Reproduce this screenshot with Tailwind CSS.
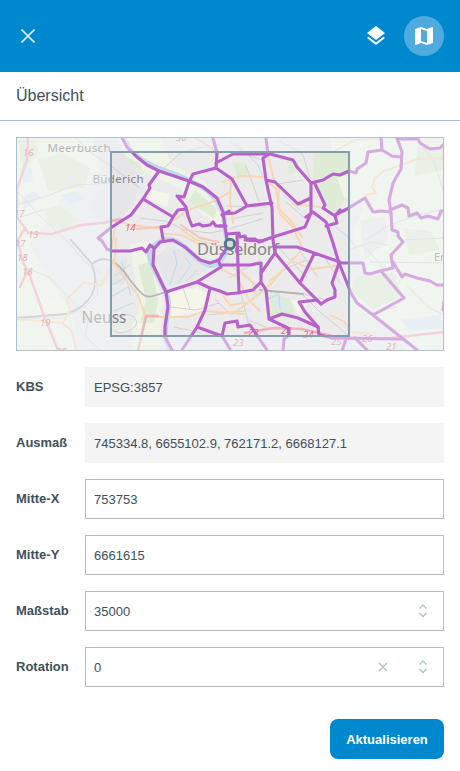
<!DOCTYPE html>
<html lang="de">
<head>
<meta charset="utf-8">
<title>Übersicht</title>
<script src="https://cdn.jsdelivr.net/npm/@tailwindcss/browser@4"></script>
</head>
<body class="bg-white text-[#3e505b] font-['Liberation_Sans',Arial,sans-serif]">
<header class="h-[72px] bg-[#0088ce] flex items-center justify-between px-4">
  <button class="size-6 flex items-center justify-center" aria-label="Schließen">
    <svg class="size-6" viewBox="0 0 24 24" stroke="#e5f5fc" stroke-width="1.7" fill="none"><path d="M5.5 5.5 18.5 18.5M18.5 5.5 5.5 18.5"/></svg>
  </button>
  <div class="flex items-center gap-2">
    <button class="size-10 flex items-center justify-center" aria-label="Ebenen">
      <svg class="size-6" viewBox="0 0 24 24" fill="white"><path d="m11.99 18.54-7.37-5.73L3 14.07l9 7 9-7-1.63-1.27zM12 16l7.36-5.73L21 9l-9-7-9 7 1.63 1.27z"/></svg>
    </button>
    <button class="size-10 rounded-full bg-[#4dacdd] flex items-center justify-center" aria-label="Karte">
      <svg class="size-6" viewBox="0 0 24 24" fill="white"><path d="m20.5 3-.16.03L15 5.1 9 3 3.36 4.9c-.21.07-.36.25-.36.48V20.5c0 .28.22.5.5.5l.16-.03L9 18.9l6 2.1 5.64-1.9c.21-.07.36-.25.36-.48V3.5c0-.28-.22-.5-.5-.5zM15 19l-6-2.11V5l6 2.11V19z"/></svg>
    </button>
  </div>
</header>
<h1 class="h-[49px] border-b border-[#adbfc8] px-4 pt-[14px] text-base leading-5 font-normal">Übersicht</h1>
<main class="px-4 pt-4">
  <div class="h-[214px] overflow-hidden">
  <svg class="block w-full h-full" viewBox="16 137 428 214" fill="none" stroke-linejoin="round" stroke-linecap="round">
    <rect x="16" y="137" width="428" height="214" fill="#ebebeb"/>
    <!-- countryside and parks -->
    <g fill="#eff4e7">
      <path d="M16 137H92L104 160 85 190 60 200 30 245 55 290 72 312 75 350H16zM118 137H160L172 165 205 182 222 208V228L202 215 180 188 130 166zM330 137H444V350H405L388 325 350 310 365 270 352 235 365 205 340 195zM130 245 152 241 150 265 162 296 160 350H132V325L140 310z"/>
    </g>
    <g fill="#deebd5">
      <path d="M38 158 65 154 90 168 84 188 48 191zM18 140H35L39 153 23 171zM45 209 60 205 78 220 65 230 48 225zM315 153H349V174L337 178 345 200 333 216 320 199 312 182zM287 157 298 161 300 170 289 176zM138 265 151 262 158 301 154 323H140L146 300zM122 155 139 163 144 173 124 162zM195 190 217 209 214 218 188 202zM234 163H247V176L237 180zM267 290 292 300 295 317 268 319zM355 276 395 273 401 297 373 309 351 291zM404 228 430 231 440 250 409 255zM418 147H443V170L414 176z"/>
    </g>
    <path fill="#f6f5e9" d="M170 292 197 288 207 294 201 312 172 316zM150 190 170 194 167 207 149 199zM290 300 310 299 299 315zM30 293 60 303 70 324 42 320z"/>
    <path fill="#dae9f1" d="M21 168 30 166 33 181 23 183zM22 197 35 191 41 198 23 210zM61 195 76 191 85 199 70 205zM65 175 74 173 72 180zM400 320 440 315 444 328 410 331zM271 296 283 300 287 312 276 308z"/>
    <!-- built-up blocks -->
    <path fill="#e6e6e8" d="M92 140 118 140 124 158 140 172 136 198 120 220 102 225 88 204 107 184zM170 244 185 252 208 268 192 281 167 286 156 258zM92 265 127 258 124 284 99 286zM360 221 385 216 388 240 365 260z"/>
    <path fill="#f1e9e7" d="M207 183 240 216 234 231 223 224zM275 205 293 203 299 222 279 229zM212 296 231 296 234 314 211 309zM244 277 257 276 259 284 242 287z"/>
    <!-- water -->
    <g stroke="#bfdbea">
      <path stroke-width="5" d="M124 137C128 153 145 163 161 169S202 184 212 195 224 211 225 226 231 246 222 259 201 263 189 251 169 236 156 244 152 266 162 284 168 306 166 325 168 347 173 351"/>
      <path stroke-width="1" d="M170 285 177 263 174 251M178 283 191 265 185 257M186 281 197 271M114 276 130 265M112 285 129 275M111 297 128 287M114 311 133 303M122 263 131 296M16 219 42 210M235 143 246 153 258 165 263 177M268 299 279 294 280 309M285 196 300 210M331 223 349 238 356 247M365 247 385 270"/>
    </g>
    <!-- minor streets and railways -->
    <g stroke="#d2d2d5" stroke-width="1">
      <path d="M16 190 40 216 66 240 85 261 100 273M75 137 90 152 115 169 140 188M16 205 47 196 75 185 113 183M16 318 64 318 86 306 98 294 95 273 75 250 66 240M31 270 49 277 77 306 88 321 85 336 101 351M140 218 165 221 185 230 210 233 225 230M165 167 182 152 207 146M230 142 247 155 262 160M246 166 259 201M227 206 266 207M279 141 293 148 303 155 310 178M278 184 303 180M286 202 306 219M231 219 263 213M229 229 262 219M227 263 258 286M229 278 260 260M276 292 303 294 327 300M276 245 307 278M281 271 306 260M298 248 317 276M302 294 320 312 349 336M323 254 340 283M371 262 444 263M365 240 390 225 418 215 444 209M404 240 444 238M407 286 428 307 444 315M363 315 397 307M416 137 434 162 443 190M335 151 355 140 382 139M351 249 371 242 387 245M183 288 190 309M171 307 196 310 219 303M174 327 201 333M215 299 231 315M208 315 245 311M241 294 249 325M249 320 267 328"/>
      <path stroke="#b5b5b7" stroke-width="1.800" d="M71 240 92 264C103 255 116 258 130 280 139 291 144 299 153 296L166 292M92 264C101 290 89 306 66 314L16 318M260 290 303 294"/>
      <path d="M112 321C120 312 132 313 136 320S124 337 114 331"/>
    </g>
    <!-- main roads -->
    <g stroke="#f6d6b5" stroke-width="1.800">
      <path d="M112 247 116 221 132 225 162 229 188 210 212 202 230 192M16 319 63 323 70 310 67 299 83 283 102 285 115 258 116 238M62 323 72 331 76 350M112 260 128 283 138 295 145 315M222 182 240 176 263 177 276 189 280 214 292 226 303 249M231 178 230 200 233 223M268 155 273 177 279 190 278 208 291 221 302 237M293 204 320 207M181 229 196 240 223 247M221 269 237 277 249 300 260 311M220 314 237 311 248 303 273 282 293 258M146 317 171 317 188 317 204 311 244 314M223 296 230 305 246 303M294 262 311 269 336 266M330 315 345 322 350 332 370 334M366 195 376 193 372 187 375 178 384 171 399 166 417 159 444 158M165 234 182 235 198 244M240 270 253 283 256 295M300 252 283 270 270 281"/>
    </g>
    <g stroke="#efb3bf" stroke-width="2.500">
      <path d="M28 137 27 160 17 189 17 217 25 228 28 233 52 234 81 225 103 223 121 219M25 228 18 240 22 260 30 276 44 316 58 350M27 272 20 287M138 351 146 316 158 316M245 333 273 328 302 329 336 337 382 339 444 332"/>
      <path stroke="#f4c5b8" stroke-width="2" d="M137 229 168 226M181 225 200 238 219 242M196 138 212 148 218 157"/>
    </g>
    <!-- place names -->
    <g font-family="Noto Sans, sans-serif" stroke="none">
      <g fill="#858585">
        <text x="47.500" y="152" font-size="11.500" textLength="63" fill="#777">Meerbusch</text>
        <text x="92.500" y="183" font-size="11.500" textLength="51">Büderich</text>
        <text x="81.500" y="323" font-size="15.500" textLength="45">Neuss</text>
        <text x="434" y="261" font-size="11">Er</text>
        <text x="197" y="255" font-size="16.500" textLength="82">Düsseldorf</text>
      </g>
      <g fill="#d96b7c" font-size="9.500" font-style="italic">
        <text x="23" y="156">16</text><text x="14" y="217">17</text><text x="28" y="238">13</text><text x="15" y="247">17</text><text x="17" y="261">18</text><text x="22" y="275">18</text><text x="40" y="326">19</text><text x="56" y="355">20</text><text x="125" y="231">14</text><text x="176" y="141">30</text><text x="248" y="336">22</text><text x="281" y="334">24</text><text x="303" y="338">24</text><text x="233" y="346">23</text><text x="331" y="345">25</text><text x="362" y="342">26</text><text x="386" y="350">21</text>
      </g>
    </g>
    <!-- district boundaries -->
    <g stroke="#b761ca" stroke-width="3.100">
      <path d="M122 138 127 147 137 157 147 165 159 171 189 181 203 187 217 198 223 212 225 227 227 240 226 249 219 260 210 263 200 260 185 247 173 240 160 242 154 249 153 265 166 292 168 307 165 327 165 337 172 350"/>
      <path d="M159 171 149 185 150 188 143 199 131 215 112 227 98 238 102 241 107 249 112 251 130 251 138 249 142 248 146 252 150 245 154 248M143 199 173 217 168 226 161 227 163 239M173 217 178 210 186 209"/>
      <path d="M213 138 217 153 216 168 193 174 189 182 184 197 177 196 186 207 188 216 192 226 199 224 203 226 210 225 213 222 216 226 225 226M216 163 233 154 263 154 270 154 293 160 297 167 311 183 323 180 333 174 340 175 349 171 356 173 357 169 366 163 368 152 382 150 381 138"/>
      <path d="M216 168 232 179 247 206 235 213 223 214M247 206 272 203M266 138 268 155 263 158 266 180 272 208 273 240 275 253 261 273M266 180 275 182 298 204 311 198M311 183 311 213 305 227 273 237 259 242 255 239 246 239 245 236 240 237 239 233 227 234M219 226 226 226M222 215 229 211"/>
      <path d="M315 184 325 205 323 208 335 216 337 223 326 226M335 216 340 210M306 217 313 212 326 222 333 243 339 263 351 293 357 303 373 315 402 338 417 350M335 215 347 209 365 198 373 212 381 211 390 212M382 150 392 156 400 157M397 138 402 152 401 169 393 183 389 200 391 213 392 230 398 232 398 236 403 242 391 255 393 268 380 271 370 274 365 273 363 263 339 263M397 139 418 139 420 143 430 149 440 148 444 144"/>
      <path d="M390 210 402 205 408 208 409 216 417 213 421 218 428 216 438 219 441 211 444 211M393 262 402 277 405 274 417 278 430 281 437 285 444 285M381 271 404 298 373 315M444 302 443 310M339 263 332 283 335 290 335 297 327 300 321 304 317 300 299 302 305 312 318 327 319 335M332 338 402 339M355 338 367 350M346 339 342 351"/>
      <path d="M275 253 300 283 321 304M314 254 300 283M275 247 297 247 340 262M261 263 250 265 220 265M261 263 261 282 266 290 269 319 282 314 298 318 318 327M269 319 288 328 289 335 284 339 283 351M261 282 253 290 237 293 227 294 220 291 210 288 197 282 166 292M197 282 221 267M210 288 205 310 197 327 182 350M197 327 222 336 230 349M222 336 225 323 237 321 238 327 250 325 267 350M238 265 239 293M237 234 238 265M218 260 221 267M245 240 263 241M320 335 332 338"/>
    </g>
    <path fill="#f3f6f8" fill-opacity=".5" fill-rule="evenodd" d="M16 137H444V351H16zM110 151V337H350V151z"/>
    <rect x="111" y="152" width="238" height="184" stroke="#849eaa" stroke-width="2" stroke-linejoin="miter"/>
    <circle cx="230" cy="244" r="4.700" fill="#d9dddc" stroke="#547a87" stroke-width="3"/>
    <rect x="16.500" y="137.500" width="427" height="213" stroke="#adbfc8" stroke-linejoin="miter"/>
  </svg>
  </div>
  <form class="mt-4 grid grid-cols-[69px_359px] gap-y-4 text-[13px]">
    <label class="font-bold leading-[39px]">KBS</label>
    <div class="h-10 bg-[#f4f4f4] px-[9px] leading-[41px]">EPSG:3857</div>
    <label class="font-bold leading-[39px]">Ausmaß</label>
    <div class="h-10 bg-[#f4f4f4] px-[9px] leading-[41px]">745334.8, 6655102.9, 762171.2, 6668127.1</div>
    <label class="font-bold leading-[39px]">Mitte-X</label>
    <div class="h-10 border border-[#adbfc8] px-2 leading-[39px]">753753</div>
    <label class="font-bold leading-[39px]">Mitte-Y</label>
    <div class="h-10 border border-[#adbfc8] px-2 leading-[39px]">6661615</div>
    <label class="font-bold leading-[39px]">Maßstab</label>
    <div class="h-10 border border-[#adbfc8] pl-2 pr-[12px] flex items-center justify-between leading-[39px]">35000
      <svg class="size-4" viewBox="0 0 16 16" fill="none" stroke="#adbfc8" stroke-width="1.300"><path d="M4.500 5.500 8 2 11.500 5.500M4.500 10 8 13.500 11.500 10"/></svg>
    </div>
    <label class="font-bold leading-[39px]">Rotation</label>
    <div class="h-10 border border-[#adbfc8] pl-2 pr-[12px] flex items-center leading-[39px]"><span class="flex-1">0</span>
      <svg class="size-4 mr-6" viewBox="0 0 16 16" fill="none" stroke="#adbfc8" stroke-width="1.200"><path d="M4 4 12 12M12 4 4 12"/></svg>
      <svg class="size-4" viewBox="0 0 16 16" fill="none" stroke="#adbfc8" stroke-width="1.300"><path d="M4.500 5.500 8 2 11.500 5.500M4.500 10 8 13.500 11.500 10"/></svg>
    </div>
  </form>
  <div class="mt-8 flex justify-end">
    <button class="h-10 w-[114px] rounded-lg bg-[#0088ce] text-white font-bold text-[13px] pt-px">Aktualisieren</button>
  </div>
</main>
</body>
</html>
